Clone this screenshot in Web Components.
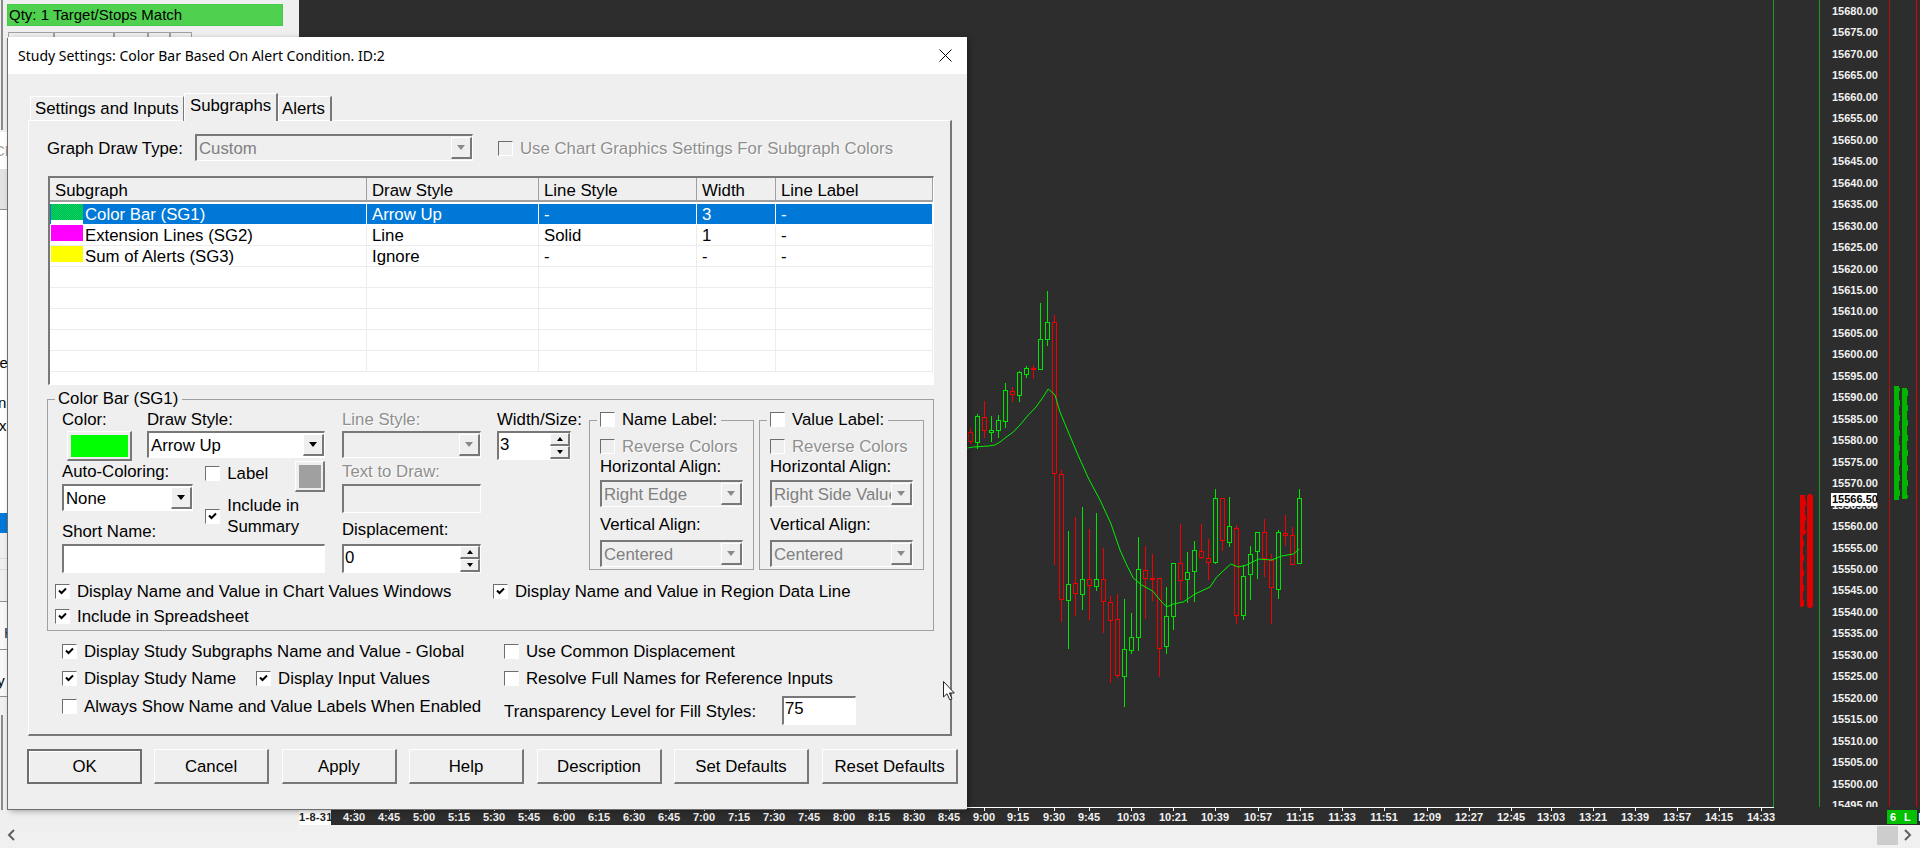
<!DOCTYPE html>
<html>
<head>
<meta charset="utf-8">
<title>Study Settings</title>
<style>
    html, body {
        margin: 0;
        width: 1920px;
        height: 848px;
        overflow: hidden;
        background: #efefef;
        font-family: "Liberation Sans", Arial, sans-serif;
        font-size: 16.8px;
        color: #000;
    }
</style>
</head>
<body>
<sc-workspace></sc-workspace>

<script>
const SUNKEN = `
    box-sizing: border-box;
    border-style: solid;
    border-width: 2px 1px 1px 2px;
    border-color: #787878 #fff #fff #787878;
`;
const RAISED = `
    box-sizing: border-box;
    border-style: solid;
    border-width: 1px 2px 2px 1px;
    border-color: #fff #787878 #787878 #fff;
    background: #efefef;
`;

class ScCheck extends HTMLElement {
    connectedCallback () {
        const checked = this.hasAttribute ("checked");
        const disabled = this.hasAttribute ("disabled");
        this.attachShadow ({mode: "open"}).innerHTML = `
        <style>
            :host { display: inline-flex; align-items: center; gap: 7px; line-height: 21px; white-space: nowrap; }
            .box {
                ${SUNKEN}
                border-width: 1px;
                width: 15px;
                height: 15px;
                flex: none;
                background: ${disabled ? "#efefef" : "#fff"};
                border-color: #6e6e6e #fff #fff #6e6e6e;
            }
            svg { display: block; }
            .txt { color: ${disabled ? "#8f8f8f" : "inherit"}; ${disabled ? "text-shadow: 1px 1px 0 #fff;" : ""} }
        </style>
        <div class="box">${checked ? '<svg width="13" height="13" viewBox="0 0 13 13"><path d="M3 5.5 L5.5 8 L10 3.5" fill="none" stroke="#000" stroke-width="2"/></svg>' : ""}</div>
        <div class="txt"><slot></slot></div>`;
    }
}
customElements.define ("sc-check", ScCheck);

class ScCombo extends HTMLElement {
    connectedCallback () {
        const disabled = this.hasAttribute ("disabled");
        this.attachShadow ({mode: "open"}).innerHTML = `
        <style>
            :host {
                ${SUNKEN}
                display: flex;
                height: 27px;
                background: ${disabled ? "#efefef" : "#fff"};
                color: ${disabled ? "#808080" : "#000"};
            }
            .val { flex: 1; min-width: 0; padding-left: 2px; line-height: 25px; overflow: hidden; white-space: nowrap; }
            .btn { ${RAISED} width: 21px; flex: none; margin-top: 1px; margin-bottom: 1px; display: flex; align-items: center; justify-content: center; }
            .arrow { width: 0; height: 0; border: 4.5px solid transparent; border-bottom-width: 0; border-top: 5px solid ${disabled ? "#8a8a8a" : "#000"}; }
        </style>
        <div class="val"><slot></slot></div>
        <div class="btn"><div class="arrow"></div></div>`;
    }
}
customElements.define ("sc-combo", ScCombo);

class ScEdit extends HTMLElement {
    connectedCallback () {
        const disabled = this.hasAttribute ("disabled");
        this.attachShadow ({mode: "open"}).innerHTML = `
        <style>
            :host {
                ${SUNKEN}
                display: block;
                height: 29px;
                padding-left: 1px;
                line-height: 22px;
                background: ${disabled ? "#efefef" : "#fff"};
            }
        </style>
        <slot></slot>`;
    }
}
customElements.define ("sc-edit", ScEdit);

class ScSpin extends HTMLElement {
    connectedCallback () {
        this.attachShadow ({mode: "open"}).innerHTML = `
        <style>
            :host { ${SUNKEN} display: flex; height: 29px; background: #fff; }
            .val { flex: 1; padding-left: 1px; line-height: 24px; }
            .btns { width: 20px; flex: none; display: flex; flex-direction: column; }
            .b { ${RAISED} flex: 1; display: flex; align-items: center; justify-content: center; }
            .up { width: 0; height: 0; border: 3.5px solid transparent; border-top-width: 0; border-bottom: 4px solid #000; }
            .dn { width: 0; height: 0; border: 3.5px solid transparent; border-bottom-width: 0; border-top: 4px solid #000; }
        </style>
        <div class="val"><slot></slot></div>
        <div class="btns"><div class="b"><div class="up"></div></div><div class="b"><div class="dn"></div></div></div>`;
    }
}
customElements.define ("sc-spin", ScSpin);

class ScSwatch extends HTMLElement {
    connectedCallback () {
        this.attachShadow ({mode: "open"}).innerHTML = `
        <style>
            :host { ${RAISED} display: block; padding: 3px 2px 2px 3px; }
            div { width: 100%; height: 100%; background: ${this.getAttribute ("color")}; }
        </style>
        <div></div>`;
    }
}
customElements.define ("sc-swatch", ScSwatch);

class ScButton extends HTMLElement {
    connectedCallback () {
        const def = this.hasAttribute ("default");
        this.attachShadow ({mode: "open"}).innerHTML = `
        <style>
            :host {
                ${RAISED}
                display: flex;
                align-items: center;
                justify-content: center;
                height: 35px;
                padding-top: 1px;
                ${def ? "border: 2px solid #6e6e6e; box-shadow: inset 1px 1px 0 #fff;" : ""}
            }
        </style>
        <slot></slot>`;
    }
}
customElements.define ("sc-button", ScButton);

// cadre avec titre, fieldset natif pour que le trait s'arrete au titre
class ScGroup extends HTMLElement {
    connectedCallback () {
        this.attachShadow ({mode: "open"}).innerHTML = `
        <style>
            :host { display: block; box-sizing: border-box; }
            fieldset { box-sizing: border-box; margin: 0; padding: 0; height: 100%; min-width: 0; border: 1px solid #a0a0a0; }
            legend { padding: 0 4px 0 3px; margin-left: 7px; line-height: 18px; }
        </style>
        <fieldset>
            <legend><slot name="title"></slot></legend>
            <slot></slot>
        </fieldset>`;
    }
}
customElements.define ("sc-group", ScGroup);

class ScSubgraphList extends HTMLElement {
    connectedCallback () {
        const rows = [
            ["Color Bar (SG1)", "Arrow Up", "-", "3", "-", "sg1"],
            ["Extension Lines (SG2)", "Line", "Solid", "1", "-", "sg2"],
            ["Sum of Alerts (SG3)", "Ignore", "-", "-", "-", "sg3"],
            ["", "", "", "", ""], ["", "", "", "", ""], ["", "", "", "", ""], ["", "", "", "", ""], ["", "", "", "", ""]
        ];
        const rowHtml = rows.map ((r, i) => `
            <div class="row ${i == 0 ? "sel" : ""}">
                <div class="c first">${r[5] ? `<i class="${r[5]}"></i>` : ""}<span>${r[0]}</span></div>
                <div class="c">${r[1]}</div><div class="c">${r[2]}</div><div class="c">${r[3]}</div><div class="c">${r[4]}</div>
            </div>`).join ("");
        this.attachShadow ({mode: "open"}).innerHTML = `
        <style>
            :host {
                ${SUNKEN}
                display: block;
                height: 209px;
                background: #fff;
                overflow: hidden;
            }
            .head, .row { display: grid; grid-template-columns: 317px 172px 158px 79px 157px; }
            .head { height: 22px; background: #efefef; border-bottom: 2px solid #a0a0a0; box-sizing: content-box; margin-bottom: 2px; }
            .head div { padding-left: 5px; line-height: 25px; height: 22px; overflow: hidden; border-right: 1px solid #a0a0a0; box-sizing: border-box; white-space: nowrap; }
            .row { height: 21px; box-sizing: border-box; border-bottom: 1px solid #ececec; }
            .c { padding-left: 5px; line-height: 21px; box-sizing: border-box; border-right: 1px solid #ececec; white-space: nowrap; }
            .first { padding-left: 35px; position: relative; }
            .sel { background: #0078d7; color: #fff; border-bottom-color: #fff; }
            .sel .c { border-right-color: #fff; }
            i { position: absolute; left: 1px; top: 0; width: 32px; height: 16px; }
            .sel i { box-shadow: 0 4px 0 #fff; }
            .sg1 { background: repeating-conic-gradient(#00e040 0 25%, #00b070 0 50%) 0 0 / 2px 2px; }
            .sg2 { background: #f0f; }
            .sg3 { background: #ff0; }
        </style>
        <div class="head"><div>Subgraph</div><div>Draw Style</div><div>Line Style</div><div>Width</div><div>Line Label</div></div>
        ${rowHtml}`;
    }
}
customElements.define ("sc-subgraph-list", ScSubgraphList);

class ScLabelGroup extends HTMLElement {
    connectedCallback () {
        const title = this.getAttribute ("title");
        const hAlign = this.getAttribute ("halign");
        this.attachShadow ({mode: "open"}).innerHTML = `
        <style>
            :host { display: block; width: 165px; height: 161px; }
            sc-group { height: 100%; }
            .in { padding: 0 10px; display: flex; flex-direction: column; }
            .lbl { height: 18px; line-height: 18px; white-space: nowrap; }
            .gap-rev { margin-top: 6px; height: 19px; }
            .gap-h { margin-top: 2px; margin-bottom: 4px; }
            .gap-v { margin-top: 9px; margin-bottom: 6px; }
        </style>
        <sc-group>
            <sc-check slot="title">${title}</sc-check>
            <div class="in">
                <sc-check class="gap-rev" disabled>Reverse Colors</sc-check>
                <div class="lbl gap-h">Horizontal Align:</div>
                <sc-combo disabled>${hAlign}</sc-combo>
                <div class="lbl gap-v">Vertical Align:</div>
                <sc-combo disabled>Centered</sc-combo>
            </div>
        </sc-group>`;
    }
}
customElements.define ("sc-label-group", ScLabelGroup);

class ScSubgraphsPage extends HTMLElement {
    connectedCallback () {
        this.attachShadow ({mode: "open"}).innerHTML = `
        <style>
            :host {
                display: flex;
                flex-direction: column;
                box-sizing: border-box;
                width: 924px;
                height: 616px;
                padding: 13px 0 0 18px;
                border-style: solid;
                border-width: 1px 2px 2px 1px;
                border-color: #fff #787878 #787878 #fff;
            }
            .lbl { height: 18px; line-height: 18px; white-space: nowrap; }
            .off { color: #8f8f8f; text-shadow: 1px 1px 0 #fff; }
            .low { line-height: 20px; }
            .top { display: flex; align-items: center; height: 27px; margin-bottom: 15px; }
            .top .lbl { width: 148px; line-height: 20px; }
            .top sc-combo { width: 278px; }
            .top sc-check { margin-left: 25px; margin-top: 2px; }
            sc-subgraph-list { margin-left: 1px; width: 886px; margin-bottom: 5px; flex: none; }
            .colorbar { width: 887px; height: 241px; flex: none; }
            .grp { display: flex; align-items: flex-start; padding-left: 14px; margin-top: 3px; }
            .a { width: 263px; margin-right: 17px; }
            .b { width: 139px; margin-right: 16px; }
            .c { width: 74px; margin-right: 18px; }
            .r1 { display: flex; height: 51px; }
            .r1 > div:first-child { width: 85px; }
            .r1 > div:last-child { width: 178px; }
            .mt2 { margin-top: 2px; }
            .mt4 { margin-top: 4px; }
            .mt5 { margin-top: 5px; }
            .r2 { display: flex; height: 60px; }
            .auto { width: 145px; }
            .auto sc-combo { width: 131px; }
            .mid { width: 90px; }
            .mid sc-check:first-child { margin-top: 1px; height: 21px; }
            .mid sc-check:last-child { margin-top: 9px; }
            .col-btn { width: 30px; height: 31px; margin-top: -1px; }
            .swatch-color { margin: 2px 0 0 5px; width: 65px; height: 30px; }
            .bd { height: 51px; }
            .bd2 { height: 59px; }
            .lg { margin-top: -2px; }
            .vl { margin-left: 5px; }
            .opts { display: grid; grid-template-columns: 438px 1fr; padding: 8px 0 0 7px; row-gap: 4px; }
            .bottom { display: grid; grid-template-columns: 442px 1fr; padding: 10px 0 0 15px; }
            .bottom .col { display: flex; flex-direction: column; gap: 6px; }
            .bottom sc-check { height: 21px; }
            .two { display: flex; gap: 20px; }
            .third { margin-top: 1px; }
            .trans { display: flex; align-items: center; height: 29px; }
            .trans .lbl { width: 278px; line-height: 20px; }
            .trans sc-edit { width: 74px; }
        </style>
        <div class="top">
            <div class="lbl">Graph Draw Type:</div>
            <sc-combo disabled>Custom</sc-combo>
            <sc-check disabled>Use Chart Graphics Settings For Subgraph Colors</sc-check>
        </div>
        <sc-subgraph-list></sc-subgraph-list>
        <sc-group class="colorbar">
            <span slot="title">Color Bar (SG1)</span>
            <div class="grp">
                <div class="a">
                    <div class="r1">
                        <div><div class="lbl">Color:</div><sc-swatch class="swatch-color" color="#00ff00"></sc-swatch></div>
                        <div><div class="lbl">Draw Style:</div><sc-combo class="mt2">Arrow Up</sc-combo></div>
                    </div>
                    <div class="r2">
                        <div class="auto"><div class="lbl low">Auto-Coloring:</div><sc-combo class="mt4">None</sc-combo></div>
                        <div class="mid">
                            <sc-check>Label</sc-check>
                            <sc-check checked>Include in<br>Summary</sc-check>
                        </div>
                        <sc-swatch class="col-btn" color="#a0a0a0"></sc-swatch>
                    </div>
                    <div class="lbl low">Short Name:</div>
                    <sc-edit class="mt4"></sc-edit>
                </div>
                <div class="b">
                    <div class="bd"><div class="lbl off">Line Style:</div><sc-combo class="mt2" disabled></sc-combo></div>
                    <div class="bd2"><div class="lbl off low">Text to Draw:</div><sc-edit class="mt4" disabled></sc-edit></div>
                    <div class="lbl">Displacement:</div>
                    <sc-spin class="mt5">0</sc-spin>
                </div>
                <div class="c">
                    <div class="lbl">Width/Size:</div>
                    <sc-spin class="mt2">3</sc-spin>
                </div>
                <sc-label-group class="lg" title="Name Label:" halign="Right Edge"></sc-label-group>
                <sc-label-group class="lg vl" title="Value Label:" halign="Right Side Value"></sc-label-group>
            </div>
            <div class="opts">
                <sc-check checked>Display Name and Value in Chart Values Windows</sc-check>
                <sc-check checked>Display Name and Value in Region Data Line</sc-check>
                <sc-check checked>Include in Spreadsheet</sc-check>
            </div>
        </sc-group>
        <div class="bottom">
            <div class="col">
                <sc-check checked>Display Study Subgraphs Name and Value - Global</sc-check>
                <div class="two"><sc-check checked>Display Study Name</sc-check><sc-check checked>Display Input Values</sc-check></div>
                <sc-check class="third">Always Show Name and Value Labels When Enabled</sc-check>
            </div>
            <div class="col">
                <sc-check>Use Common Displacement</sc-check>
                <sc-check>Resolve Full Names for Reference Inputs</sc-check>
                <div class="trans third"><div class="lbl">Transparency Level for Fill Styles:</div><sc-edit>75</sc-edit></div>
            </div>
        </div>`;
    }
}
customElements.define ("sc-subgraphs-page", ScSubgraphsPage);

class ScTabs extends HTMLElement {
    connectedCallback () {
        this.attachShadow ({mode: "open"}).innerHTML = `
        <style>
            :host { display: flex; align-items: flex-end; height: 28px; padding-left: 2px; position: relative; z-index: 1; margin-bottom: -1px; }
            div {
                box-sizing: border-box;
                height: 25px;
                line-height: 23px;
                border-style: solid;
                border-width: 1px 1px 0 1px;
                border-color: #fff #787878 #fff #fff;
                white-space: nowrap;
            }
            .on { height: 28px; line-height: 23px; background: #efefef; border-right-width: 2px; }
        </style>
        <div style="width: 154px; padding-left: 4px">Settings and Inputs</div>
        <div class="on" style="width: 94px; padding-left: 5px">Subgraphs</div>
        <div style="width: 54px; padding-left: 3px; border-right-width: 2px">Alerts</div>`;
    }
}
customElements.define ("sc-tabs", ScTabs);

class ScDialog extends HTMLElement {
    connectedCallback () {
        this.attachShadow ({mode: "open"}).innerHTML = `
        <style>
            :host {
                position: absolute;
                left: 8px;
                top: 37px;
                width: 959px;
                height: 772px;
                background: #efefef;
                box-shadow: -1px 1px 0 #6e6e6e, 2px 2px 6px rgba(0, 0, 0, .35);
                display: flex;
                flex-direction: column;
            }
            .title {
                height: 37px;
                flex: none;
                background: #fff;
                display: flex;
                align-items: center;
                justify-content: space-between;
                padding: 0 15px 0 10px;
                font-family: "Noto Sans", "Open Sans", sans-serif;
                font-size: 14px;
            }
            .close { display: block; }
            .body { flex: 1; padding: 19px 0 0 20px; display: flex; flex-direction: column; }
            .btns { display: flex; padding-top: 13px; margin-left: -1px; }
            ::slotted(sc-button) { margin-right: 13px; flex: none; }
        </style>
        <div class="title">
            <span>${this.getAttribute ("heading")}</span>
            <svg class="close" width="13" height="13" viewBox="0 0 13 13"><path d="M.5 .5 L12.5 12.5 M12.5 .5 L.5 12.5" stroke="#000" fill="none"/></svg>
        </div>
        <div class="body">
            <slot></slot>
            <div class="btns"><slot name="buttons"></slot></div>
        </div>`;
    }
}
customElements.define ("sc-dialog", ScDialog);

// x dans le zoom du graphique : [wick haut, corps haut, corps bas, wick bas, couleur]
const CANDLES = [
    [475,487,514,521,"r"],[433,439,517,538,"g"],[394,442,481,503,"r"],[438,481,487,516,"g"],
    [436,451,481,503,"g"],[340,361,454,473,"g"],[352,364,373,395,"r"],[304,307,376,395,"g"],
    [289,295,313,323,"g"],[286,295,298,327,"r"],[99,208,298,298,"g"],[64,157,208,227,"g"],
    [136,157,610,884,"r"],[601,613,988,1055,"r"],[784,943,991,1136,"g"],[742,940,970,1037,"r"],
    [712,928,973,1019,"g"],[778,928,946,1049,"r"],[730,928,949,962,"g"],[835,928,994,1088,"r"],
    [979,997,1051,1238,"r"],[973,1048,1216,1223,"r"],[988,1138,1219,1310,"g"],[1030,1102,1141,1151,"g"],
    [802,898,1102,1142,"g"],[828,901,925,1046,"r"],[853,925,925,992,"r"],[925,925,1135,1220,"r"],
    [952,1039,1129,1151,"g"],[878,878,1039,1079,"g"],[763,878,931,989,"r"],[847,907,928,998,"g"],
    [814,841,904,995,"g"],[763,844,862,868,"r"],[808,865,877,929,"r"],[658,685,877,881,"g"],
    [685,685,811,842,"r"],[682,769,817,830,"g"],[766,775,1036,1061,"r"],[886,919,1036,1049,"g"],
    [829,853,913,989,"g"],[785,785,844,926,"g"],[748,785,865,920,"r"],[853,871,952,1061,"r"],
    [781,787,958,986,"g"],[736,790,796,827,"r"],[772,796,883,884,"r"],[658,685,880,880,"g"]
];
const AVERAGE = [[22,535],[40,531],[85,528],[105,524],[120,517],[135,505],[160,485],[185,458],[205,435],[228,412],[245,388],[265,358],[285,375],[300,425],[325,485],[350,545],[385,625],[420,690],[452,760],[480,840],[500,885],[520,925],[545,945],[578,962],[600,990],[620,1010],[640,1002],[670,997],[705,973],[750,950],[770,920],[812,883],[835,892],[860,885],[895,868],[935,870],[965,858],[1000,853],[1018,838]];
const TIMES = [["4:30",354],["4:45",389],["5:00",424],["5:15",459],["5:30",494],["5:45",529],["6:00",564],["6:15",599],["6:30",634],["6:45",669],["7:00",704],["7:15",739],["7:30",774],["7:45",809],["8:00",844],["8:15",879],["8:30",914],["8:45",949],["9:00",984],["9:15",1018],["9:30",1054],["9:45",1089],["10:03",1131],["10:21",1173],["10:39",1215],["10:57",1258],["11:15",1300],["11:33",1342],["11:51",1384],["12:09",1427],["12:27",1469],["12:45",1511],["13:03",1551],["13:21",1593],["13:39",1635],["13:57",1677],["14:15",1719],["14:33",1761]];

// colonne de volume irreguliere, largeur qui varie un peu par tranche
function ragged (x, top, bottom, width, col) {
    let out = `<rect x="${x}" y="${top}" width="${width - 1}" height="${bottom - top}" fill="${col}"/>`;
    for (let y = top + 2; y < bottom - 2; y += 3) {
        if ((y * 7) % 5 < 2) {
            out += `<rect x="${x + width - 1}" y="${y}" width="1" height="3" fill="${col}"/>`;
        }
    }
    return out;
}

class ScChart extends HTMLElement {
    connectedCallback () {
        const zx = x => 960 + x / 3;
        const zy = y => Math.round (270 + y / 3);
        let candles = "";
        CANDLES.forEach ((c, i) => {
            const x = 970 + 7 * i;
            const col = c[4] == "g" ? "#00e400" : "#f00000";
            candles += `<path d="M${x + .5} ${zy (c[0])} V${zy (c[3])}" stroke="${col}"/>`;
            candles += `<rect x="${x - 2 + .5}" y="${zy (c[1]) + .5}" width="4" height="${Math.max (zy (c[2]) - zy (c[1]), 1)}" fill="#2d2d2d" stroke="${col}"/>`;
        });
        const line = AVERAGE.map (p => `${zx (p[0]).toFixed (1)},${zy (p[1])}`).join (" ");
        let prices = "";
        for (let i = 0; i < 38; i++) {
            const y = 11 + i * 21.46;
            const price = (15680 - i * 5).toFixed (2);
            prices += `<text x="1832" y="${(y + 4).toFixed (0)}">${price}</text>`;
        }
        let times = "";
        TIMES.forEach (t => {
            times += `<path d="M${t[1] + .5} 807 V811" stroke="#fff"/><text x="${t[1]}" y="821" text-anchor="middle">${t[0]}</text>`;
        });
        this.attachShadow ({mode: "open"}).innerHTML = `
        <style>
            :host { display: block; flex: 1; background: #2d2d2d; }
            svg { display: block; }
            text { font: bold 11px "Liberation Sans", Arial, sans-serif; fill: #f2f2f2; }
        </style>
        <svg width="1621" height="825" viewBox="299 0 1621 825" shape-rendering="crispEdges">
            <clipPath id="plot"><rect x="299" y="0" width="1621" height="807"/></clipPath>
            <path d="M1773.5 0 V807 M1819.5 0 V807" stroke="#1e9a1e"/>
            <path d="M1889.5 0 V807" stroke="#b01010"/>
            <path d="M1916.5 0 V807" stroke="#e00000" stroke-width="1"/>
            <path d="M299 807.5 H1774" stroke="#fff"/>
            <g fill="none">${candles}</g>
            <polyline points="${line}" fill="none" stroke="#00f000" shape-rendering="auto"/>
            <g clip-path="url(#plot)">${prices}</g>
            ${times}
            ${ragged (1800, 495, 535, 6, "#e00000")}
            ${ragged (1800, 535, 607, 4, "#e00000")}
            ${ragged (1894, 386, 500, 6, "#00b400")}
            ${ragged (1902, 388, 499, 6, "#00b400")}
            <rect x="1807" y="494" width="6" height="114" rx="3" fill="#e00000" shape-rendering="auto"/>
            <rect x="1831" y="493" width="46" height="13" fill="#fff"/>
            <text x="1832" y="503" style="fill:#000">15566.50</text>
            <rect x="298" y="810" width="33" height="15" fill="#fff"/>
            <rect x="298" y="810" width="1" height="15" fill="#222"/>
            <text x="299" y="821" style="fill:#222;letter-spacing:.3px">1-8-31</text>
            <rect x="1887" y="810" width="30" height="14" fill="#00c000"/>
            <text x="1890" y="821" style="letter-spacing:2.4px;fill:#fff">6 L E</text>
        </svg>`;
    }
}
customElements.define ("sc-chart", ScChart);

class ScBackWindow extends HTMLElement {
    connectedCallback () {
        this.attachShadow ({mode: "open"}).innerHTML = `
        <style>
            :host { display: block; width: 299px; height: 825px; box-sizing: border-box; background: #efefef; overflow: hidden; font-size: 15px; }
            .rail { border-left: 2px solid #8a8a8a; margin-left: 1px; padding-left: 4px; height: 130px; box-sizing: border-box; overflow: hidden; }
            .bar { width: 276px; height: 22px; background: #4fd14f; line-height: 20px; padding-left: 1px; box-sizing: border-box; border: 1px solid #49c949; }
            .gap { height: 4px; }
            .tabs { display: flex; margin: 6px 0 0 1px; height: 6px; }
            .tabs div { border: 1px solid #a0a0a0; border-bottom: 0; box-sizing: border-box; }
            .strip { width: 8px; overflow: hidden; }
            .strip div { white-space: nowrap; box-sizing: border-box; }
            .low { margin-left: 1px; border-left: 2px solid #8a8a8a; height: 95px; }
        </style>
        <div class="rail">
            <div class="gap"></div>
            <div class="bar">Qty: 1 Target/Stops Match</div>
            <div class="tabs"><div style="width:46px"></div><div style="width:60px"></div><div style="width:34px"></div><div style="width:22px"></div><div style="width:22px"></div></div>
        </div>
        <div class="strip">
            <div style="height:2px"></div>
            <div style="height:37px;background:#fff;color:#999;margin-left:-6px;line-height:37px">CE</div>
            <div style="height:41px;background:#e2e2e2;border-bottom:1px solid #909090"></div>
            <div style="height:144px;background:#fff"></div>
            <div style="height:18px;background:#fff;margin-left:-8px;line-height:18px">ce</div>
            <div style="height:22px;background:#fff"></div>
            <div style="height:18px;background:#fff;margin-left:-2px;line-height:18px">n</div>
            <div style="height:5px;background:#fff"></div>
            <div style="height:18px;background:#fff;margin-left:-1px;line-height:18px">xp</div>
            <div style="height:78px;background:#fff"></div>
            <div style="height:20px;background:#0078d7"></div>
            <div style="height:26px;border-bottom:1px solid #dcdcdc"></div>
            <div style="height:11px;border-bottom:1px solid #dcdcdc"></div>
            <div style="height:32px;border-bottom:1px solid #8f8f8f"></div>
            <div style="height:48px;background:#f7f7f7;border-bottom:1px solid #8f8f8f;padding-left:4px;line-height:62px;color:#1a2a60">H</div>
            <div style="height:47px;background:#f7f7f7;border-bottom:1px solid #8f8f8f;margin-left:-6px;line-height:62px">ly</div>
            <div style="height:18px"></div>
        </div>
        <div class="low"></div>`;
    }
}
customElements.define ("sc-back-window", ScBackWindow);

class ScScrollbar extends HTMLElement {
    connectedCallback () {
        this.attachShadow ({mode: "open"}).innerHTML = `
        <style>
            :host { display: flex; align-items: center; height: 23px; background: #f0f0f0; padding: 0 8px 0 7px; }
            .fill { flex: 1; }
            .thumb { width: 21px; height: 19px; background: #cdcdcd; margin: 0 5px 3px 0; }
            svg { display: block; margin-bottom: 3px; }
        </style>
        <svg width="9" height="12" viewBox="0 0 9 12"><path d="M7 1 L2 6 L7 11" fill="none" stroke="#606060" stroke-width="2"/></svg>
        <div class="fill"></div>
        <div class="thumb"></div>
        <svg width="9" height="12" viewBox="0 0 9 12"><path d="M2 1 L7 6 L2 11" fill="none" stroke="#606060" stroke-width="2"/></svg>`;
    }
}
customElements.define ("sc-scrollbar", ScScrollbar);

class ScCursor extends HTMLElement {
    connectedCallback () {
        this.attachShadow ({mode: "open"}).innerHTML = `
        <style>
            :host { position: absolute; left: 943px; top: 681px; width: 13px; height: 20px; }
            svg { display: block; }
        </style>
        <svg width="13" height="20" viewBox="0 0 13 20"><path d="M.5 .5 V16 L4 12.7 L6.7 18.7 L9 17.7 L6.4 12 H11.3 Z" fill="#fff" stroke="#222"/></svg>`;
    }
}
customElements.define ("sc-cursor", ScCursor);

class ScWorkspace extends HTMLElement {
    connectedCallback () {
        this.attachShadow ({mode: "open"}).innerHTML = `
        <style>
            :host { display: block; position: relative; width: 1920px; height: 848px; overflow: hidden; }
            .main { display: flex; height: 825px; }
        </style>
        <div class="main"><sc-back-window></sc-back-window><sc-chart></sc-chart></div>
        <sc-scrollbar></sc-scrollbar>
        <sc-dialog heading="Study Settings: Color Bar Based On Alert Condition. ID:2">
            <sc-tabs></sc-tabs>
            <sc-subgraphs-page></sc-subgraphs-page>
            <sc-button slot="buttons" default style="width:115px; margin-right:12px">OK</sc-button>
            <sc-button slot="buttons" style="width:115px">Cancel</sc-button>
            <sc-button slot="buttons" style="width:115px; margin-right:12px">Apply</sc-button>
            <sc-button slot="buttons" style="width:115px">Help</sc-button>
            <sc-button slot="buttons" style="width:125px; margin-right:12px">Description</sc-button>
            <sc-button slot="buttons" style="width:135px">Set Defaults</sc-button>
            <sc-button slot="buttons" style="width:136px">Reset Defaults</sc-button>
        </sc-dialog>
        <sc-cursor></sc-cursor>`;
    }
}
customElements.define ("sc-workspace", ScWorkspace);
</script>
</body>
</html>
